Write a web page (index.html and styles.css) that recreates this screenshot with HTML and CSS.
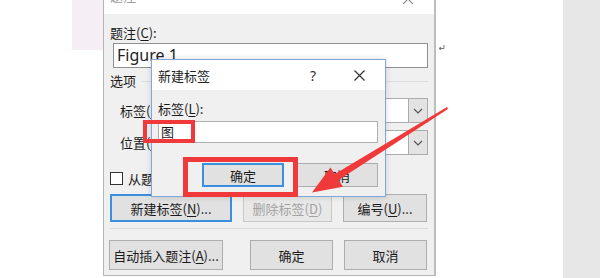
FILE: index.html
```html
<!DOCTYPE html>
<html lang="zh-CN">
<head>
    <meta charset="UTF-8">
    <title>题注</title>
    <link rel="stylesheet" href="styles.css">
</head>
<body>
    <div class="screen">
        <div class="doc-left">
            <div class="pink"></div>
        </div>

        <!-- 题注 dialog, title bar cut off at top -->
        <div class="dlg">
            <div class="dlg-title">
                <span>题注</span>
                <svg class="dlg-close" width="10" height="10" viewBox="0 0 10 10"><path d="M0 0L10 10M10 0L0 10" stroke="#8a8a8a" stroke-width="1.2"/></svg>
            </div>
            <div class="dlg-body">
                <div class="lbl first">题注(<u>C</u>):</div>
                <div class="field">Figure 1</div>
                <div class="group">
                    <span>选项</span>
                    <i class="rule"></i>
                </div>
                <div class="opt-row">
                    <span>标签(<u>L</u>):</span>
                    <div class="combo">
                        <div class="combo-val"></div>
                        <div class="combo-btn">
                            <svg width="10" height="6" viewBox="0 0 10 6"><path d="M1 1L5 5L9 1" fill="none" stroke="#555" stroke-width="1.2"/></svg>
                        </div>
                    </div>
                </div>
                <div class="opt-row second">
                    <span>位置(<u>P</u>):</span>
                    <div class="combo">
                        <div class="combo-val"></div>
                        <div class="combo-btn">
                            <svg width="10" height="6" viewBox="0 0 10 6"><path d="M1 1L5 5L9 1" fill="none" stroke="#555" stroke-width="1.2"/></svg>
                        </div>
                    </div>
                </div>
                <div class="check-row">
                    <span class="box"></span>
                    <span>从题注中排除标签(<u>E</u>)</span>
                </div>
                <div class="btn-row one">
                    <div class="btn focus w-new">新建标签(<u>N</u>)...</div>
                    <div class="btn off w-del">删除标签(<u>D</u>)</div>
                    <div class="btn w-num">编号(<u>U</u>)...</div>
                </div>
                <i class="sep"></i>
                <div class="btn-row two">
                    <div class="btn w-auto">自动插入题注(<u>A</u>)...</div>
                    <div class="btn w-ok">确定</div>
                    <div class="btn w-cancel">取消</div>
                </div>
            </div>
        </div>

        <div class="doc-right">
            <svg class="ret" width="7" height="6" viewBox="0 0 7 6"><path d="M6 0V3.5H1.5M3 2L1 3.5L3 5" fill="none" stroke="#777" stroke-width="1"/></svg>
        </div>
        <div class="strip"></div>

        <!-- 新建标签 dialog on top -->
        <div class="sub">
            <div class="sub-title">
                <span>新建标签</span>
                <span class="help">?</span>
                <svg class="sub-close" width="11" height="11" viewBox="0 0 11 11"><path d="M0.5 0.5L10.5 10.5M10.5 0.5L0.5 10.5" stroke="#333" stroke-width="1.2"/></svg>
            </div>
            <div class="sub-body">
                <div class="lbl">标签(<u>L</u>):</div>
                <div class="sub-field">图</div>
                <div class="sub-btns">
                    <div class="btn focus">确定</div>
                    <div class="btn">取消</div>
                </div>
            </div>
        </div>

        <div class="mark mark-a"></div>
        <div class="mark mark-b"></div>

        <svg class="arrow" width="600" height="278" viewBox="0 0 600 278">
            <polygon points="447,107 448,109 338.6,180.1 343,186.8 312,192.5 330.4,167.4 334.8,174.1" fill="#f0393a"/>
        </svg>
    </div>
</body>
</html>
```

FILE: styles.css
```css
*{
    margin: 0;
    padding: 0;
    box-sizing: border-box;
}

body{
    background-color: #fff;
    font-family: "Noto Sans CJK SC", "Noto Sans", sans-serif;
    font-size: 13px;
    color: #1a1a1a;
}

u{
    text-decoration: underline;
    text-underline-offset: 2px;
}

.screen{
    width: 600px;
    height: 278px;
    display: flex;
    align-items: flex-start;
    position: relative;
    overflow: hidden;
    background-color: #fff;
}

.doc-left{
    width: 103px;
    flex-shrink: 0;
}
.pink{
    margin-left: 72px;
    width: 31px;
    height: 50px;
    background-color: #f5eff5;
}

/* outer dialog */
.dlg{
    width: 333px;
    height: 293px;
    margin-top: -17px;
    flex-shrink: 0;
    background-color: #f0f0f0;
    border: 1px solid #b4b4b4;
    border-right: 2px solid #bdbdbd;
    display: flex;
    flex-direction: column;
}
.dlg-title{
    height: 30px;
    background-color: #fff;
    padding: 3px 0 0 6px;
    line-height: 18px;
    color: #9a9a9a;
    display: flex;
    align-items: flex-start;
}
.dlg-close{
    margin-left: auto;
    margin-right: 21px;
    margin-top: 7px;
}
.dlg-body{
    padding: 0 6px 0 6px;
    display: flex;
    flex-direction: column;
}
.lbl{
    line-height: 18px;
    height: 18px;
}
.lbl.first{
    margin-top: 10px;
}
.field{
    margin: 1px 0 0 3px;
    height: 25px;
    background-color: #fff;
    border: 1px solid #8f8f8f;
    font-family: "Noto Sans", sans-serif;
    font-size: 16px;
    line-height: 23px;
    padding-left: 3px;
    color: #222;
}
.group{
    margin-top: 4px;
    height: 18px;
    line-height: 18px;
    display: flex;
    align-items: center;
}
.rule{
    flex: 1;
    height: 1px;
    margin-left: 6px;
    background-color: #dcdcdc;
}
.opt-row{
    margin-top: 8px;
    height: 25px;
    padding-left: 10px;
    display: flex;
    align-items: center;
}
.opt-row.second{
    margin-top: 7px;
}
.combo{
    margin-left: auto;
    width: 260px;
    height: 25px;
    display: flex;
    border: 1px solid #acacac;
    background-color: #fff;
}
.combo-val{
    flex: 1;
}
.combo-btn{
    width: 19px;
    background-color: #e3e3e3;
    border-left: 1px solid #acacac;
    display: flex;
    align-items: center;
    justify-content: center;
}
.check-row{
    margin-top: 16px;
    height: 14px;
    display: flex;
    align-items: center;
}
.box{
    width: 13px;
    height: 13px;
    border: 1px solid #333;
    background-color: #fff;
    margin-right: 5px;
}
.btn-row{
    display: flex;
}
.btn-row.one{
    margin-top: 9px;
    gap: 11px;
}
.btn-row.two{
    margin-top: 11px;
    margin-left: -1px;
}
.btn{
    height: 28px;
    background-color: #e1e1e1;
    border: 1px solid #adadad;
    display: flex;
    align-items: center;
    justify-content: center;
    white-space: nowrap;
}
.btn.focus{
    border: 2px solid #3b8ee0;
}
.btn.off{
    color: #a3a3a3;
    background-color: #e8e8e8;
    border-color: #c8c8c8;
}
.w-new{ width: 122px; }
.w-del{ width: 89px; }
.w-num{ width: 84px; }
.btn-row.two .btn{
    height: 30px;
}
.w-auto{ width: 114px; }
.w-ok{ width: 83px; margin-left: 27px; }
.w-cancel{ width: 83px; margin-left: 11px; }
.sep{
    margin-top: 6px;
    height: 1px;
    background-color: #dadada;
}

.doc-right{
    width: 127px;
    flex-shrink: 0;
    height: 278px;
}
.ret{
    margin: 45px 0 0 2px;
    display: block;
}
.strip{
    flex: 1;
    height: 278px;
    background-color: #e7e7e7;
}

/* 新建标签 dialog */
.sub{
    position: absolute;
    left: 151px;
    top: 59px;
    width: 235px;
    height: 138px;
    border: 1px solid #7fa8d8;
    background-color: #f0f0f0;
    box-shadow: 0 0 6px rgba(0, 0, 0, .15);
    display: flex;
    flex-direction: column;
}
.sub-title{
    height: 30px;
    background-color: #fff;
    padding-left: 6px;
    display: flex;
    align-items: center;
    color: #222;
}
.help{
    margin-left: auto;
    font-family: "Noto Sans", sans-serif;
    font-size: 14px;
    margin-right: 38px;
    color: #333;
}
.sub-close{
    margin-right: 20px;
}
.sub-body{
    padding: 0 7px 0 6px;
    display: flex;
    flex-direction: column;
}
.sub-body .lbl{
    margin-top: 10px;
}
.sub-field{
    margin-top: 3px;
    height: 22px;
    background-color: #fff;
    border: 1px solid #b0b0b0;
    padding-left: 2px;
    line-height: 20px;
}
.sub-btns{
    margin-top: 20px;
    display: flex;
    justify-content: flex-end;
    gap: 12px;
}
.sub-btns .btn{
    width: 82px;
    height: 24px;
}

/* red annotation marks */
.mark{
    position: absolute;
    border: 4px solid #f0393a;
}
.mark-a{
    left: 143px;
    top: 120px;
    width: 52px;
    height: 23px;
}
.mark-b{
    left: 183px;
    top: 157px;
    width: 115px;
    height: 40px;
    border-width: 5px;
}
.arrow{
    position: absolute;
    left: 0;
    top: 0;
}
```
